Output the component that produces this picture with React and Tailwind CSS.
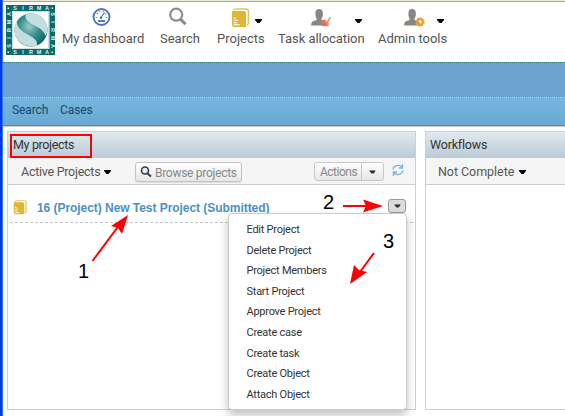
import React from 'react';

const Caret = ({ className = '' }) => (
  <svg className={`shrink-0 ${className}`} width="7" height="4" viewBox="0 0 7 4" fill="currentColor">
    <path d="M0 0h7v1L4.5 4h-2L0 1z" />
  </svg>
);

const Gauge = () => (
  <svg width="20" height="20" viewBox="0 0 20 20" fill="none">
    <circle cx="9.500" cy="10" r="8" fill="#fff" stroke="#4a76bb" strokeWidth="1.900" />
    <path d="M3.500 10.500h2M4.500 6l1.400 1M7.500 3.700l.6 1.700M11.500 3.700l-.4 1.500M14.500 6.500l-1.300.7M13.800 10.500h1.700" stroke="#7d9bce" strokeWidth="1.100" />
    <path d="M9 10.500l3.500-5" stroke="#527bbd" strokeWidth="1.300" />
    <path d="M6 14h7" stroke="#416fb8" strokeWidth="1.800" />
    <circle cx="9" cy="10.700" r="1.200" fill="#416fb8" />
  </svg>
);

const Magnifier = () => (
  <svg width="20" height="20" viewBox="0 0 20 20" fill="none">
    <circle cx="8.200" cy="7.700" r="6" stroke="#8b8d91" strokeWidth="2.200" />
    <path d="M12.500 12.200l5 5" stroke="#8b8588" strokeWidth="3" />
  </svg>
);

const Book = ({ size = 20 }) => (
  <svg className="shrink-0" width={size} height={size} viewBox="0 0 20 20">
    <path d="M2.500 2.500Q3 1 5 1h10Q17.500 1 17.500 3.500V15.500l-1.500 2" fill="none" stroke="#e5c65c" strokeWidth="1.600" />
    <path d="M1.500 3h11Q15 3 15 5.500V19H3Q1 19 1 16.500V3z" fill="#e0b634" />
    <path d="M2.500 10h2.500M2.500 12.300h4.500M2.500 14.600h3.500M2.500 16.700h6" stroke="#fff6d5" strokeWidth="1.200" />
  </svg>
);

const Person = ({ children }) => (
  <svg width="22" height="20" viewBox="0 0 22 20">
    <path d="M5.500 5.500Q5.500 2 9 2t3.800 3.500v3.500l-1.300 2.500v1.500l3.500 1q2 .8 2 4.500H1q0-3.500 2-4.300l3.500-1.200v-1.500L5.500 9z" fill="#8a8580" />
    {children}
  </svg>
);

const Logo = () => (
  <svg width="49" height="50" viewBox="0 0 49 50" className="mt-[3px] ml-[3px] shrink-0">
    <defs>
      <radialGradient id="orb" cx="45%" cy="40%" r="60%">
        <stop offset="0" stopColor="#9ccac8" />
        <stop offset=".5" stopColor="#3a918e" />
        <stop offset="1" stopColor="#0a6866" />
      </radialGradient>
    </defs>
    <rect width="49" height="50" fill="#0b6b69" />
    <rect x="6" y="6" width="37.500" height="38" fill="#fff" />
    <rect x="6.800" y="6.800" width="36" height="36.400" fill="none" stroke="#8db9b7" strokeWidth=".5" />
    <circle cx="25" cy="25" r="16.500" fill="url(#orb)" />
    <path d="M20 9.500C28 6.500 39 11 41 20c1 5 .3 8-1.500 11C38 26 34 23 28.500 20.500 23 18 18 14 20 9.500z" fill="#c2dee0" />
    <path d="M11 16c0 6 3 9 9 12.500 7 4 12 6.500 11 12C23 43.500 12 39 9 29.500 7.500 24 8.500 19.500 11 16z" fill="#c2dee0" />
    <g fill="#e4f1f0" fontFamily="Liberation Sans, sans-serif" fontWeight="700" fontSize="5.500" textAnchor="middle">
      {['S', 'I', 'R', 'M', 'A'].map((c, i) => (
        <React.Fragment key={i}>
          <text x={9 + i * 8} y="5">{c}</text>
          <text x={9 + i * 8} y="49">{c}</text>
          <text transform={`translate(5 ${41 - i * 8}) rotate(-90)`}>{c}</text>
          <text transform={`translate(44.500 ${9 + i * 8}) rotate(90)`}>{c}</text>
        </React.Fragment>
      ))}
      {[[2, 3], [46, 3], [2, 47], [46, 47]].map(([x, y]) => (
        <rect key={`${x}-${y}`} x={x - 0.5} y={y - 0.5} width="1.500" height="1.500" />
      ))}
    </g>
  </svg>
);

const NavItem = ({ label, icon, iconPad, caretPad, className }) => (
  <div className={`shrink-0 whitespace-nowrap ${className}`}>
    <div className={`flex h-[22px] ${iconPad}`}>
      {icon}
      {caretPad && <Caret className={`text-black ${caretPad}`} />}
    </div>
    <div className="h-[20px] leading-[20px]">{label}</div>
  </div>
);

const menu = ['Edit Project', 'Delete Project', 'Project Members', 'Start Project', 'Approve Project', 'Create case', 'Create task', 'Create Object', 'Attach Object'];

export default function App() {
  return (
    <div className="relative flex h-[416px] w-[565px] overflow-hidden bg-white font-['Roboto',sans-serif] text-[13px] text-[#555]">
      <div className="w-[3px] shrink-0 border-r border-[#2b79ff] bg-[#0037dc]" />
      <div className="flex min-w-0 flex-1 flex-col">
        <header className="flex h-[62px] shrink-0 border-t border-[#ece9d8]">
          <div className="flex w-full border-t border-[#aca899] text-[13px]">
            <Logo />
            <div className="flex pt-[5px]">
              <NavItem className="ml-[7px] w-[98px]" label="My dashboard" iconPad="pl-[30px]" icon={<Gauge />} />
              <NavItem className="w-[57px]" label="Search" iconPad="pl-[8px]" icon={<Magnifier />} />
              <NavItem className="w-[61px]" label="Projects" iconPad="pl-[14px] pt-px" icon={<Book />} caretPad="mt-[11px] ml-[4px]" />
              <NavItem className="w-[100px] tracking-[-0.050px]" label="Task allocation" iconPad="pl-[32px]" caretPad="mt-[12px] ml-[23px]"
                icon={<Person><path d="M18 14v4.500h-5.500v-5h4M14 14.500l2 2.500 4.500-7" fill="none" stroke="#e97a55" strokeWidth="1.300" /></Person>} />
              <NavItem className="w-[80px] tracking-[-0.050px]" label="Admin tools" iconPad="pl-[25px]" caretPad="mt-[12px] ml-[12px]"
                icon={<Person><circle cx="17" cy="15" r="2.800" fill="none" stroke="#f0a030" strokeWidth="2.200" /><circle cx="17" cy="15" r="4" fill="none" stroke="#f0a030" strokeWidth="1.400" strokeDasharray="1.700 1.440" /></Person>} />
            </div>
          </div>
        </header>
        <div className="h-[35px] shrink-0 border-t border-dotted border-[#2f7f79] bg-[#6ca4cf]" />
        <nav className="flex h-[30px] shrink-0 gap-[13px] border-t border-b border-t-[#b5d5e8] border-b-[#cfcfcf] [border-top-style:dotted] bg-linear-to-b from-[#75b6dc] to-[#6aa8d1] pl-[9px] text-[12px] leading-[25px] tracking-[-0.100px] text-[#174a6b] shadow-[inset_0_-1px_#4e86b4]">
          <span className="w-[35px]">Search</span><span>Cases</span>
        </nav>
        <main className="flex gap-[9px] pt-[4px] pl-[4px]">
          <section className="h-[279px] w-[409px] shrink-0 border border-[#d0d0c8]">
            <h2 className="h-[26px] bg-linear-to-b from-[#e1eaef] to-[#b9cad6] pl-[5px] text-[12.500px] leading-[26px] tracking-[-0.350px] text-[#333]">My projects</h2>
            <div className="flex h-[27px] items-start border-b border-[#ccc] bg-[#f5f5f5]">
              <span className="ml-[13px] w-[79px] text-[12.500px] leading-[27px] tracking-[-0.270px] whitespace-nowrap">Active Projects</span>
              <Caret className="mt-[12px] ml-[4px] text-black" />
              <div className="mt-[4px] ml-[24px] flex h-[20px] w-[107px] shrink-0 items-center rounded-[3px] border border-[#c4c4c4] bg-linear-to-b from-white to-[#e6e6e6] pl-[4px] text-[12px] tracking-[-0.280px] whitespace-nowrap text-[#888] shadow-[0_1px_1px_#ddd]">
                <svg className="shrink-0" width="12" height="12" viewBox="0 0 12 12" fill="none"><circle cx="5" cy="4.500" r="3.500" fill="#dff0fa" stroke="#333b4a" strokeWidth="1.600" /><path d="M7.500 7.500l3.500 3" stroke="#333b4a" strokeWidth="2" /></svg>
                <span className="ml-[3px] pt-px">Browse projects</span>
              </div>
              <div className="mt-[4px] ml-[72px] flex h-[19px] w-[70px] shrink-0 rounded-[3px] border border-[#c8c8c8] bg-linear-to-b from-white to-[#e6e6e6] text-[12px] leading-[18px] tracking-[-0.500px] text-[#888]">
                <span className="w-[47px] border-r border-[#c8c8c8] pl-[5px]">Actions</span>
                <Caret className="mt-[7px] ml-[7px] scale-90 text-[#333]" />
              </div>
              <svg className="mt-[6px] ml-[8px] shrink-0" width="12" height="12" viewBox="0 0 12 12" fill="none" stroke="#75b4df" strokeWidth="1.300"><path d="M1 5.500C1.500 1.500 7 0 10 3M11 6.500C10.500 10.500 5 12 2 9" /><path d="M10.500 0v4H7M1.500 12V8H5" /></svg>
            </div>
            <div className="mx-[2px] flex h-[38px] items-start border-b border-dashed border-[#c4c4c4] pl-[3px]">
              <div className="mt-[15px]"><Book size={15} /></div>
              <span className="mt-[14px] ml-[9px] w-[233px] font-['Liberation_Sans',sans-serif] text-[12px] leading-[18px] font-bold tracking-[-0.050px] whitespace-nowrap text-[#4b91c6]">16 (Project) New Test Project (Submitted)</span>
              <div className="mt-[14px] ml-[118px] flex h-[14px] w-[18px] shrink-0 items-center justify-center rounded-[3px] border border-[#999] bg-[#ddd] text-[#333]"><Caret className="scale-90" /></div>
            </div>
          </section>
          <section className="h-[279px] w-[160px] shrink-0 border border-[#d0d0c8]">
            <h2 className="h-[26px] bg-linear-to-b from-[#e1eaef] to-[#b9cad6] pl-[4px] text-[12.500px] leading-[26px] tracking-[-0.200px] text-[#333]">Workflows</h2>
            <div className="flex h-[27px] items-start border-b border-[#ccc] bg-[#f5f5f5]">
              <span className="ml-[12px] w-[76px] text-[12.500px] leading-[27px] tracking-[-0.050px] whitespace-nowrap">Not Complete</span>
              <Caret className="mt-[12px] ml-[5px] text-black" />
            </div>
          </section>
        </main>
      </div>

      <div className="absolute top-[213px] left-[228px] h-[197px] w-[179px] rounded-[4px] border border-[#ccc] bg-white pt-[6px] pl-[17.500px] text-[11px] tracking-[-0.250px] text-[#333] shadow-[0_5px_10px_rgba(0,0,0,0.25)]">
        {menu.map((m) => <div key={m} className="h-[20.600px] leading-[20px]">{m}</div>)}
      </div>

      <div className="absolute top-[134px] left-[10px] h-[24px] w-[82px] border-2 border-[#f00]" />
      <svg className="absolute inset-0" width="565" height="416" viewBox="0 0 565 416">
        <g stroke="#f00" strokeWidth="2">
          <path d="M92.500 261L120 224M343 206h30M374 253l-17 23" />
        </g>
        <g fill="#f00">
          <path d="M128 215l-6 19-4-6-7-2z" />
          <path d="M383 206l-20-6.500 3 6.500-3 6.500z" />
          <path d="M350 284l4-19 5 5 8 2z" />
        </g>
      </svg>
      <span className="absolute top-[260px] left-[78px] font-['Liberation_Sans',sans-serif] text-[20px] leading-[22px] text-black">1</span>
      <span className="absolute top-[191px] left-[323px] font-['Liberation_Sans',sans-serif] text-[20px] leading-[22px] text-black">2</span>
      <span className="absolute top-[230px] left-[383px] font-['Liberation_Sans',sans-serif] text-[20px] leading-[22px] text-black">3</span>
    </div>
  );
}
